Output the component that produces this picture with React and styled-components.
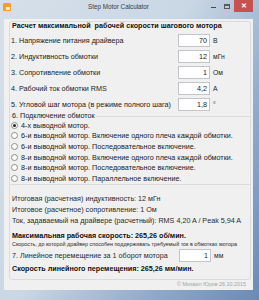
import { createGlobalStyle, styled } from "styled-components"

const Global = createGlobalStyle`
  html, body {
    margin: 0;
    padding: 0;
    background: #6a8bb6;
  }
  * {
    box-sizing: border-box;
  }
`

const Window = styled.div`
  width: 259px;
  height: 300px;
  display: flex;
  flex-direction: column;
  background: linear-gradient(120deg, #d6e0ea 0%, #c9d6e4 45%, #8fa9ca 75%, #6a8bb6 100%);
  font-family: "Liberation Sans", Arial, sans-serif;
  color: #1b1b1b;
  overflow: hidden;
`

const TitleBar = styled.div`
  height: 19px;
  display: flex;
  align-items: flex-start;
  position: relative;
`

const AppIcon = styled.div`
  width: 8px;
  height: 8px;
  margin: 3px 0 0 3px;
  background: #f39c3c;
  border-radius: 1px;
  position: relative;

  &::after {
    content: "";
    position: absolute;
    left: 3px;
    top: 4px;
    width: 4px;
    height: 3px;
    background: #fde3c4;
  }
`

const Title = styled.div`
  flex: 1;
  text-align: center;
  font-size: 6.3px;
  line-height: 14px;
  color: #3a3a3a;
  padding-left: 20px;
`

const Controls = styled.div`
  display: flex;
  align-items: flex-start;
  margin-right: 6px;
`

const CtrlButton = styled.div`
  width: ${(p) => (p.$close ? "19px" : "14px")};
  height: 12px;
  display: flex;
  align-items: center;
  justify-content: center;
  background: ${(p) => (p.$close ? "#c75050" : "transparent")};
  color: ${(p) => (p.$close ? "#fff" : "#555")};
  font-size: 7px;
  font-weight: bold;
`

const MinGlyph = styled.span`
  width: 5px;
  height: 1px;
  background: #4a4a4a;
  margin-top: 3px;
`

const MaxGlyph = styled.span`
  width: 6px;
  height: 5px;
  border: 1px solid #5a5a5a;
  border-top-width: 2px;
`

const Client = styled.div`
  flex: 1;
  margin: 0 6px 10px 4px;
  background: #f0f0f0;
  padding: 2px 2px 0 5px;
  display: flex;
  flex-direction: column;
`

const Group = styled.div`
  border: 1px solid #dcdcdc;
  border-radius: 3px;
  padding: 0 0 6px 1px;
  display: flex;
  flex-direction: column;
`

const GroupTitle = styled.div`
  font-weight: bold;
  font-size: 7.2px;
  line-height: 8px;
  padding-left: 1px;
  color: #111;
`

const Rows = styled.div`
  margin-top: 2px;
  display: flex;
  flex-direction: column;
`

const Row = styled.div`
  height: ${(p) => p.$h || 16}px;
  display: flex;
  align-items: center;
  font-size: 7.2px;
`

const Label = styled.span`
  width: 167px;
  white-space: nowrap;
`

const Field = styled.div`
  width: 32px;
  height: 13px;
  background: #fff;
  border: 1px solid #c2c5ca;
  text-align: right;
  padding-right: 2px;
  line-height: 11px;
  font-size: 7.2px;
`

const Unit = styled.span`
  margin-left: 3px;
  font-size: 6.8px;
`

const Fieldset = styled.fieldset`
  margin: 0 -1px 0 -2px;
  padding: 0 0 0 2px;
  border: 1px solid #dcdcdc;
  border-left: none;
  border-right: none;
  min-width: 0;
`

const Legend = styled.legend`
  padding: 0 1px 0 0;
  margin-left: 1px;
  font-size: 7.2px;
  line-height: 8px;
`

const RadioRow = styled.label`
  height: 10.6px;
  display: flex;
  align-items: center;
  gap: 3px;
  font-size: 7.2px;
  white-space: nowrap;
`

const Radio = styled.span`
  width: 7px;
  height: 7px;
  border-radius: 50%;
  border: 1px solid #8c8c8c;
  background: #fff;
  display: flex;
  align-items: center;
  justify-content: center;

  &::after {
    content: "";
    width: 3px;
    height: 3px;
    border-radius: 50%;
    background: ${(p) => (p.$checked ? "#222" : "transparent")};
  }
`

const Results = styled.div`
  margin-top: 8px;
  padding-left: 1px;
  display: flex;
  flex-direction: column;
  color: #2a2a2a;
`

const Line = styled.div`
  height: ${(p) => p.$h || 11}px;
  line-height: ${(p) => p.$h || 11}px;
  font-size: ${(p) => (p.$small ? "5.4px" : "7.2px")};
  font-weight: ${(p) => (p.$bold ? "bold" : "normal")};
  color: ${(p) => (p.$bold ? "#111" : "#2a2a2a")};
  margin-top: ${(p) => p.$mt || 0}px;
  white-space: nowrap;
`

const Copyright = styled.div`
  text-align: right;
  font-size: 5.4px;
  line-height: 8px;
  color: #a3a3a3;
  padding-right: 5px;
`

const params = [
  { label: "1. Напряжение питания драйвера", value: "70", unit: "В" },
  { label: "2. Индуктивность обмотки", value: "12", unit: "мГн" },
  { label: "3. Сопротивление обмотки", value: "1", unit: "Ом" },
  { label: "4. Рабочий ток обмотки RMS", value: "4,2", unit: "А" },
  { label: "5. Угловой шаг мотора (в режиме полного шага)", value: "1,8", unit: "°" },
]

const wirings = [
  "4-х выводной мотор.",
  "6-и выводной мотор. Включение одного плеча каждой обмотки.",
  "6-и выводной мотор. Последовательное включение.",
  "8-и выводной мотор. Включение одного плеча каждой обмотки.",
  "8-и выводной мотор. Последовательное включение.",
  "8-и выводной мотор. Параллельное включение.",
]

export default function App() {
  return (
    <>
      <Global />
      <Window>
        <TitleBar>
          <AppIcon />
          <Title>Step Motor Calculator</Title>
          <Controls>
            <CtrlButton>
              <MinGlyph />
            </CtrlButton>
            <CtrlButton>
              <MaxGlyph />
            </CtrlButton>
            <CtrlButton $close>✕</CtrlButton>
          </Controls>
        </TitleBar>
        <Client>
          <Group>
            <GroupTitle>Расчет максимальной&nbsp; рабочей скорости шагового мотора</GroupTitle>
            <Rows>
              {params.map((p) => (
                <Row key={p.label}>
                  <Label>{p.label}</Label>
                  <Field>{p.value}</Field>
                  <Unit>{p.unit}</Unit>
                </Row>
              ))}
            </Rows>
            <Fieldset>
              <Legend>6. Подключение обмоток</Legend>
              {wirings.map((w, i) => (
                <RadioRow key={w}>
                  <Radio $checked={i === 0} />
                  {w}
                </RadioRow>
              ))}
            </Fieldset>
            <Results>
              <Line>Итоговая (расчетная) индуктивность: 12 мГн</Line>
              <Line>Итоговое (расчетное) сопротивление: 1 Ом</Line>
              <Line>Ток, задаваемый на драйвере (расчетный): RMS 4,20 A / Peak 5,94 A</Line>
              <Line $bold $mt={4}>
                Максимальная рабочая скорость: 265,26 об/мин.
              </Line>
              <Line $small $h={7}>
                Скорость, до которой драйвер способен поддерживать требуемый ток в обмотках мотора
              </Line>
              <Row $h={16}>
                <Label>7. Линейное перемещение за 1 оборот мотора</Label>
                <Field>1</Field>
                <Unit>мм</Unit>
              </Row>
              <Line $bold $h={9}>
                Скорость линейного перемещения: 265,26 мм/мин.
              </Line>
            </Results>
          </Group>
          <Copyright>© Михаил Юров 26.10.2015</Copyright>
        </Client>
      </Window>
    </>
  )
}
